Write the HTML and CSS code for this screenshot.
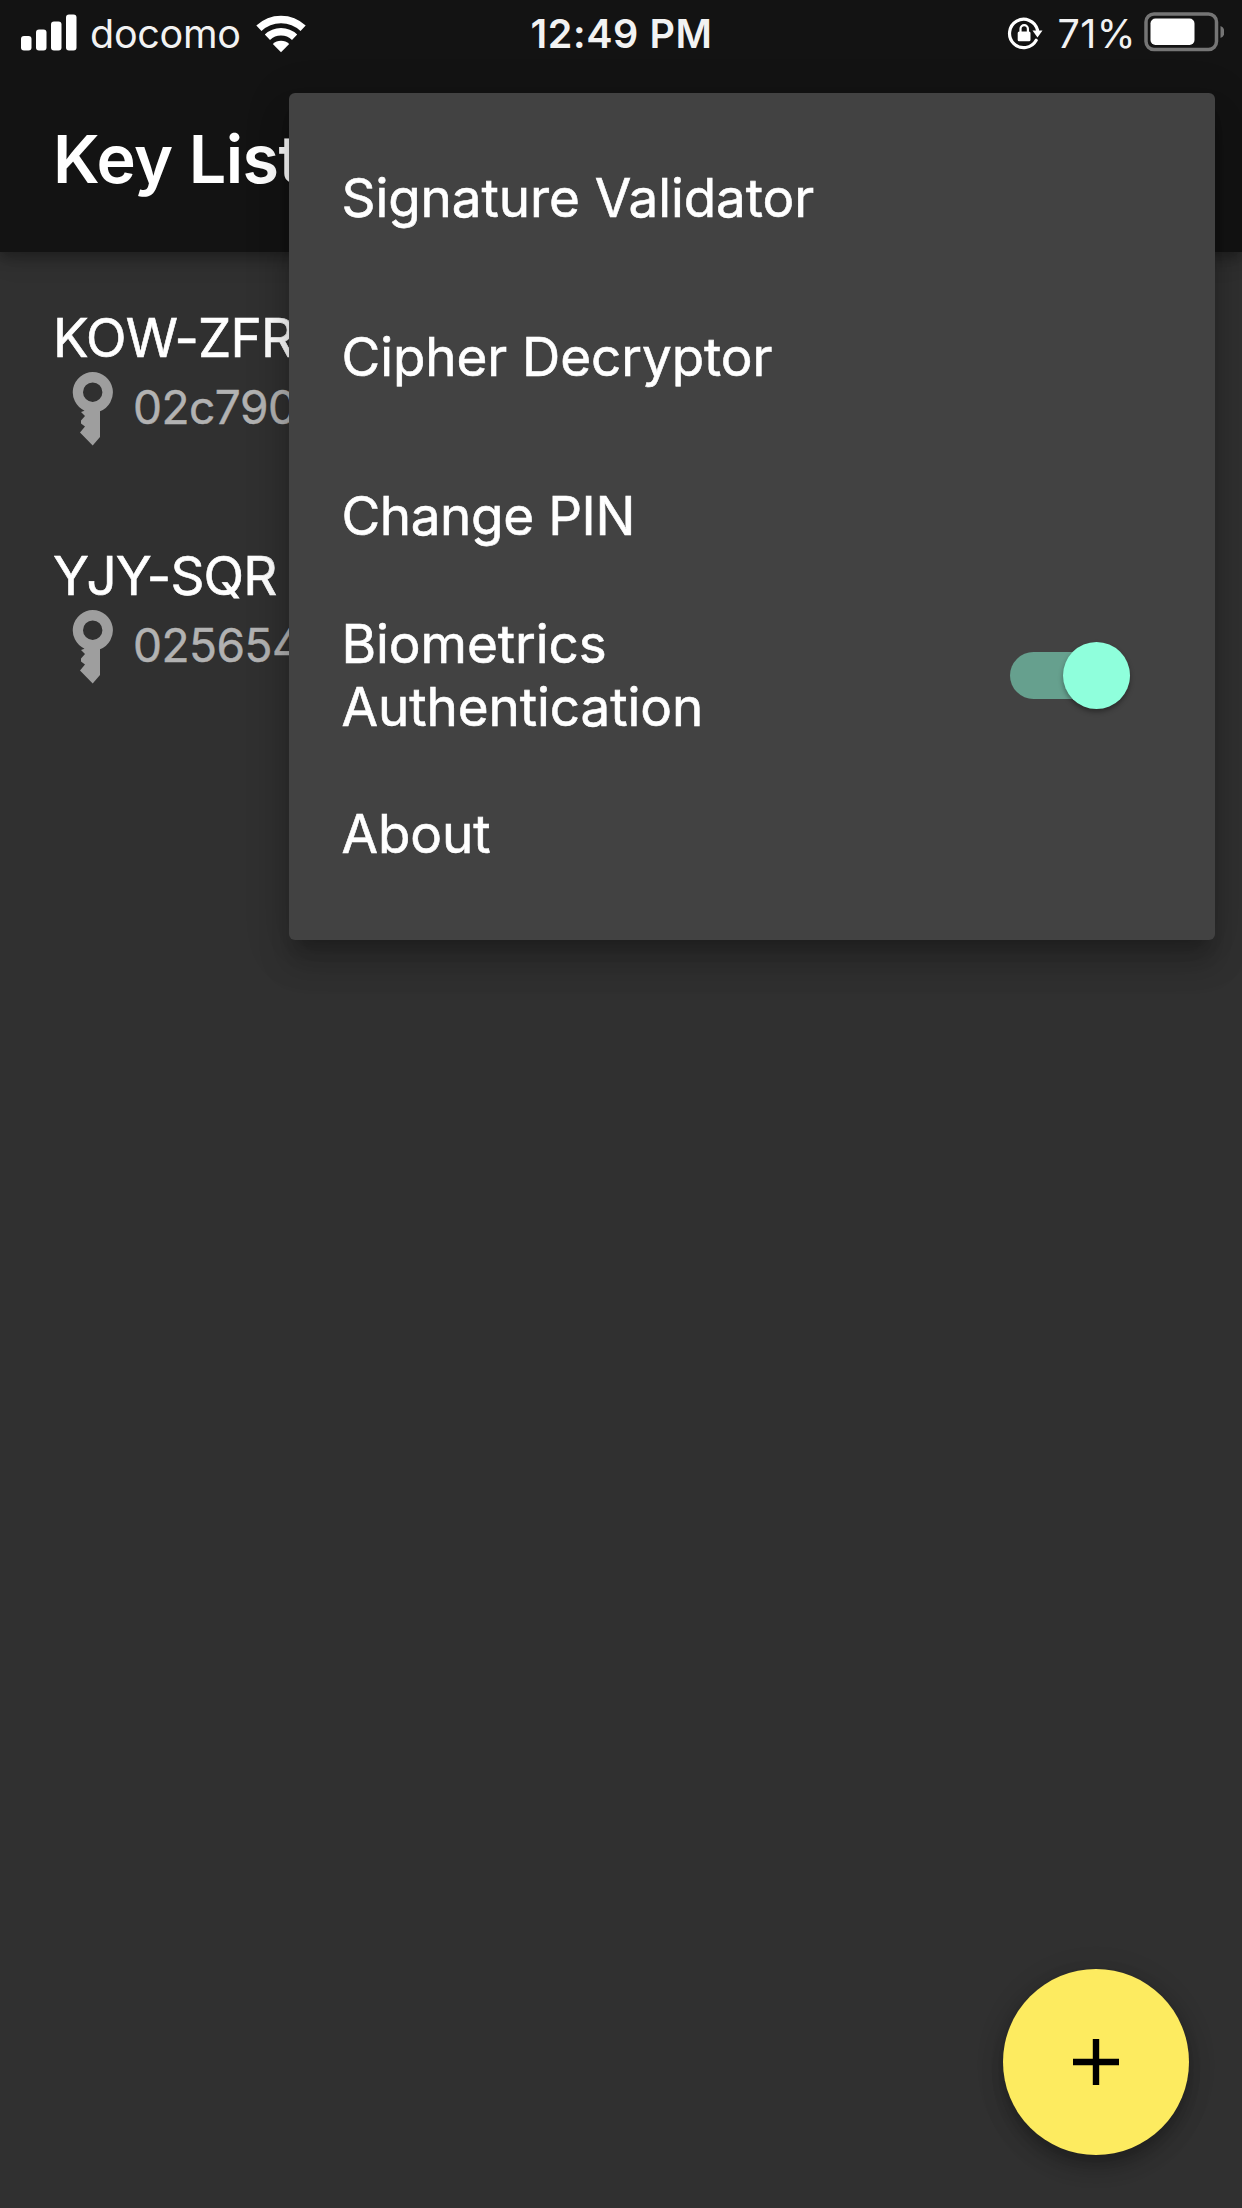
FILE: index.html
```html
<!DOCTYPE html>
<html lang="en">
<head>
<meta charset="utf-8">
<title>Key List</title>
<link rel="stylesheet" href="styles.css">
</head>
<body>
<div class="screen">
  <header class="appbar">
    <div class="status">
      <div class="status-left">
        <svg class="signal" width="56" height="37" viewBox="0 0 56 37" fill="#fff">
          <rect x="0" y="22" width="10.500" height="14.500" rx="3"/>
          <rect x="15" y="15.500" width="10.500" height="21" rx="3"/>
          <rect x="30" y="7.500" width="10.500" height="29" rx="3"/>
          <rect x="45" y="0.500" width="10.500" height="36" rx="3"/>
        </svg>
        <span class="carrier">docomo</span>
        <svg class="wifi" width="50" height="38" viewBox="0 0 50 38">
          <path d="M2.900 13.300A32 32 0 0 1 47.100 13.300" fill="none" stroke="#fff" stroke-width="7.500"/>
          <path d="M11.400 22.200A19.600 19.600 0 0 1 38.600 22.200" fill="none" stroke="#fff" stroke-width="7.500"/>
          <path d="M25 37.200L16.800 29A11.800 11.800 0 0 1 33.200 29Z" fill="#fff"/>
        </svg>
      </div>
      <span class="time">12:49 PM</span>
      <div class="status-right">
        <svg class="rotation" width="36" height="36" viewBox="0 0 36 36">
          <path d="M29.200 24.300A14.200 14.200 0 1 1 30.500 14" fill="none" stroke="#fff" stroke-width="3.200" stroke-linecap="round"/>
          <path d="M25.500 14.500H35.500L30.500 21.500Z" fill="#fff"/>
          <rect x="10.700" y="15.500" width="12.800" height="9.800" rx="1.500" fill="#fff"/>
          <path d="M13.500 16V12.800a3.700 3.700 0 0 1 7.400 0V16" fill="none" stroke="#fff" stroke-width="2.200"/>
        </svg>
        <span class="percent">71%</span>
        <svg class="battery" width="80" height="40" viewBox="0 0 80 40">
          <rect x="2" y="2" width="70.500" height="35.500" rx="8" fill="none" stroke="#757575" stroke-width="3.500"/>
          <rect x="6.500" y="6.500" width="44" height="26.500" rx="5" fill="#fff"/>
          <path d="M76.500 14a6.500 6.500 0 0 1 0 12Z" fill="#757575"/>
        </svg>
      </div>
    </div>
    <h1 class="title">Key List</h1>
  </header>

  <main class="keys">
    <section class="key">
      <div class="key-name">KOW-ZFR</div>
      <div class="key-line">
        <svg class="key-icon" width="42" height="75" viewBox="0 0 42 75">
          <path fill="#9e9e9e" fill-rule="evenodd" d="M20.700 0a20.300 20.300 0 0 1 7.300 39.200V65L20.700 73.500L8 60.500L13 54.500L9 51.500V48.500L13 44L9 40L12.500 38.700A20.300 20.300 0 0 1 20.700 0ZM20.700 10.500a9.700 9.700 0 1 0 0 19.400a9.700 9.700 0 1 0 0-19.400Z"/>
        </svg>
        <span class="key-hash">02c790</span>
      </div>
    </section>
    <section class="key">
      <div class="key-name">YJY-SQR</div>
      <div class="key-line">
        <svg class="key-icon" width="42" height="75" viewBox="0 0 42 75">
          <path fill="#9e9e9e" fill-rule="evenodd" d="M20.700 0a20.300 20.300 0 0 1 7.300 39.200V65L20.700 73.500L8 60.500L13 54.500L9 51.500V48.500L13 44L9 40L12.500 38.700A20.300 20.300 0 0 1 20.700 0ZM20.700 10.500a9.700 9.700 0 1 0 0 19.400a9.700 9.700 0 1 0 0-19.400Z"/>
        </svg>
        <span class="key-hash">025654</span>
      </div>
    </section>
  </main>

  <nav class="menu">
    <div class="item">Signature Validator</div>
    <div class="item">Cipher Decryptor</div>
    <div class="item item-tight">Change PIN</div>
    <div class="item">
      <span class="item-label">Biometrics Authentication</span>
      <span class="switch"><span class="thumb"></span></span>
    </div>
    <div class="item">About</div>
  </nav>

  <button class="fab" aria-label="Add key">
    <svg width="46" height="46" viewBox="0 0 46 46"><path d="M23 0V46M0 23H46" stroke="#000" stroke-width="6.400"/></svg>
  </button>
</div>
</body>
</html>
```
FILE: styles.css
```css
* { box-sizing: border-box; }
body { margin: 0; background: #303030; }

.screen {
  position: relative;
  width: 1242px;
  height: 2208px;
  overflow: hidden;
  background: #303030;
  color: #fff;
  font-family: Inter, "Liberation Sans", sans-serif;
}

.appbar {
  height: 252px;
  background: #131313;
  box-shadow: 0 6px 12px rgba(0, 0, 0, .28), 0 2px 30px rgba(0, 0, 0, .14);
}

.status {
  display: grid;
  grid-template-columns: 1fr auto 1fr;
  height: 67px;
  padding: 0 18px 0 21px;
  line-height: 69px;
  font-size: 39.500px;
  color: #f2f2f2;
}
.status-left, .status-right { display: flex; align-items: flex-start; }
.status-right { justify-content: flex-end; }
.signal { margin-top: 13.500px; }
.carrier { margin-left: 13px; letter-spacing: -.3px; }
.wifi { margin: 14.500px 0 0 15px; }
.time { margin-left: -2px; font-weight: 600; letter-spacing: .6px; }
.rotation { margin: 16px 15px 0 0; }
.percent { letter-spacing: .4px; }
.battery { margin: 12px 0 0 8px; }

.title {
  margin: 0;
  padding: 52px 0 0 53px;
  font-size: 66.500px;
  line-height: 80px;
  font-weight: 600;
  letter-spacing: -.6px;
}

.keys { padding-top: 55px; }
.key { height: 238px; padding-left: 53px; }
.key-name {
  font-size: 53px;
  line-height: 63px;
  letter-spacing: -.8px;
  -webkit-text-stroke: .6px currentColor;
}
.key-line { display: flex; align-items: flex-start; padding: 2px 0 0 19px; }
.key-hash {
  margin: 8px 0 0 19px;
  font-size: 46px;
  line-height: 54px;
  letter-spacing: -.5px;
  color: #b2b2b2;
  -webkit-text-stroke: .5px currentColor;
}

.menu {
  position: absolute;
  left: 288.500px;
  top: 93px;
  width: 926.500px;
  height: 847px;
  padding: 26px 54px 26px 53px;
  background: #424242;
  border-radius: 6px;
  box-shadow: 0 15px 15px -9px rgba(0, 0, 0, .2), 0 24px 30px 3px rgba(0, 0, 0, .14), 0 9px 42px 6px rgba(0, 0, 0, .12);
}
.item {
  display: flex;
  align-items: center;
  justify-content: space-between;
  height: 159px;
  font-size: 53px;
  line-height: 63px;
  letter-spacing: -.08px;
  -webkit-text-stroke: .6px currentColor;
}
.item-tight { letter-spacing: -.4px; }
.item-label { width: 400px; }
.switch {
  display: flex;
  align-items: center;
  justify-content: flex-end;
  width: 120px;
  height: 47px;
  margin-right: 31px;
  border-radius: 24px;
  background: #66a08e;
}
.thumb {
  flex: none;
  width: 67px;
  height: 67px;
  border-radius: 50%;
  background: #8fffdc;
  box-shadow: 0 3px 5px rgba(0, 0, 0, .35);
}

.fab {
  position: absolute;
  left: 1003px;
  top: 1969px;
  display: flex;
  align-items: center;
  justify-content: center;
  width: 186px;
  height: 186px;
  padding: 0;
  border: 0;
  border-radius: 50%;
  background: #fdeb60;
  box-shadow: 0 9px 15px -3px rgba(0, 0, 0, .2), 0 12px 24px rgba(0, 0, 0, .14), 0 3px 30px rgba(0, 0, 0, .12);
}
```
